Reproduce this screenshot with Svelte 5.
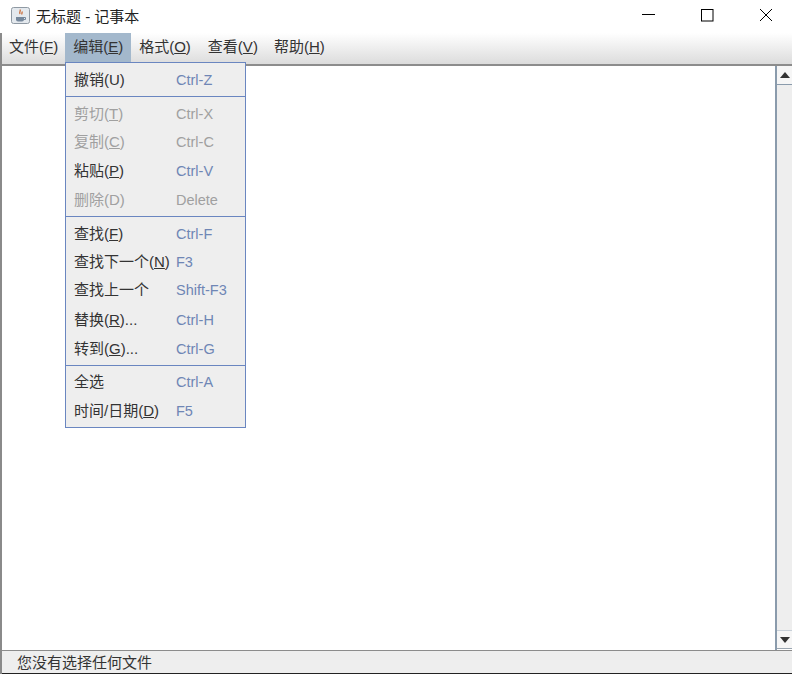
<script lang="ts">
  const menus = [
    { label: '文件', key: 'F' },
    { label: '编辑', key: 'E', active: true },
    { label: '格式', key: 'O' },
    { label: '查看', key: 'V' },
    { label: '帮助', key: 'H' }
  ];

  const groups = [
    [{ label: '撤销(U)', shortcut: 'Ctrl-Z' }],
    [
      { label: '剪切', key: 'T', shortcut: 'Ctrl-X', disabled: true },
      { label: '复制', key: 'C', shortcut: 'Ctrl-C', disabled: true },
      { label: '粘贴', key: 'P', shortcut: 'Ctrl-V' },
      { label: '删除(D)', shortcut: 'Delete', disabled: true }
    ],
    [
      { label: '查找', key: 'F', shortcut: 'Ctrl-F' },
      { label: '查找下一个', key: 'N', shortcut: 'F3' },
      { label: '查找上一个', shortcut: 'Shift-F3' },
      { label: '替换', key: 'R', tail: '...', shortcut: 'Ctrl-H' },
      { label: '转到', key: 'G', tail: '...', shortcut: 'Ctrl-G' }
    ],
    [
      { label: '全选', shortcut: 'Ctrl-A' },
      { label: '时间/日期', key: 'D', shortcut: 'F5' }
    ]
  ];
</script>

<div class="window">
  <header class="titlebar">
    <svg class="titlebar__icon" viewBox="0 0 19 17" width="19" height="17" aria-hidden="true">
      <rect x="0.5" y="0.5" width="18" height="16" rx="2" fill="#e4e9ee" stroke="#8f99a3" />
      <path d="M5 10h8v2.500a2 2 0 0 1-2 2H7a2 2 0 0 1-2-2z" fill="#76889c" />
      <path d="M13 10.500h1.500v2H13" fill="none" stroke="#76889c" />
      <path d="M9 2.500c1 1.500-1 2.500 0 4.500M11 4.500c.6.900-.6 1.600 0 3" fill="none" stroke="#c8642d" stroke-width="1.200" />
    </svg>
    <span class="titlebar__text">无标题 - 记事本</span>
    <div class="titlebar__controls">
      <svg viewBox="0 0 14 14" width="14" height="14" aria-hidden="true"><path d="M1 6.500h13" stroke="#000" fill="none" /></svg>
      <svg viewBox="0 0 14 14" width="14" height="14" aria-hidden="true"><rect x="1.500" y="1.500" width="11.500" height="11.500" stroke="#000" fill="none" /></svg>
      <svg viewBox="0 0 14 14" width="14" height="14" aria-hidden="true"><path d="M1 1l12 12M13 1L1 13" stroke="#000" fill="none" /></svg>
    </div>
  </header>

  <div class="body">
    <nav class="menubar">
      {#each menus as m}
        <span class="menubar__item" class:menubar__item--active={m.active}>{m.label}(<u>{m.key}</u>)</span>
      {/each}
    </nav>

    <div class="content">
      <div class="editor"></div>
      <div class="scrollbar">
        <div class="scrollbar__btn scrollbar__btn--up"><span class="arrow arrow--up"></span></div>
        <div class="scrollbar__track"></div>
        <div class="scrollbar__btn scrollbar__btn--down"><span class="arrow arrow--down"></span></div>
      </div>
    </div>

    <footer class="status">您没有选择任何文件</footer>
  </div>

  <div class="menu">
    {#each groups as group, i}
      {#if i > 0}<div class="menu__sep"></div>{/if}
      <div class="menu__group">
        {#each group as item}
          <div class="menu__row" class:menu__row--disabled={item.disabled}>
            <span class="menu__label">{item.label}{#if item.key}(<u>{item.key}</u>){/if}{item.tail ?? ''}</span>
            <span class="menu__shortcut">{item.shortcut}</span>
          </div>
        {/each}
      </div>
    {/each}
  </div>
</div>

<style>
  :global(body) {
    margin: 0;
    background: #fff;
  }

  .window {
    position: relative;
    width: 792px;
    height: 674px;
    overflow: hidden;
    display: flex;
    flex-direction: column;
    font-family: "Liberation Sans", "Noto Sans CJK SC", sans-serif;
    font-size: 15px;
    color: #333;
  }

  .titlebar {
    flex: 0 0 33px;
    box-sizing: border-box;
    display: flex;
    align-items: center;
    padding: 0 0 2px 11px;
    background: #fff;
    color: #222;
  }

  .titlebar__icon {
    flex-shrink: 0;
    margin-right: 6px;
  }

  .titlebar__controls {
    margin-left: auto;
    display: flex;
    gap: 45px;
    padding: 0 19px 1px 0;
  }

  .body {
    flex: 1;
    min-height: 0;
    display: flex;
    flex-direction: column;
    border-left: 2px solid #8a8a8a;
  }

  .menubar {
    flex: 0 0 33px;
    box-sizing: border-box;
    display: flex;
    border-bottom: 2px solid #8c8c8c;
    background: linear-gradient(#fff, #dcdcdc);
  }

  .menubar__item {
    padding: 0 8px;
    height: 29px;
    line-height: 28px;
  }

  .menubar__item:first-child {
    margin: 0 -1px;
  }

  .menubar__item:nth-child(3) {
    margin-right: 1px;
  }

  .menubar__item--active {
    background: #a3b8cc;
  }

  .content {
    flex: 1;
    min-height: 0;
    display: flex;
    background: #fff;
  }

  .editor {
    flex: 1;
  }

  .scrollbar {
    width: 17px;
    box-sizing: border-box;
    display: flex;
    flex-direction: column;
    padding-bottom: 1px;
    border-left: 2px solid #8a9bac;
    background: #fff;
  }

  .scrollbar__btn {
    flex: 0 0 19px;
    box-sizing: border-box;
    display: flex;
    align-items: center;
    justify-content: center;
    background: #f6f6f6;
  }

  .scrollbar__btn--up {
    border-bottom: 1px solid #8a9bac;
  }

  .scrollbar__btn--down {
    border-top: 1px solid #c8d0d8;
    border-bottom: 1px solid #9aa5b0;
  }

  .scrollbar__track {
    flex: 1;
    background: #eee;
  }

  .arrow {
    width: 0;
    height: 0;
    border-left: 5px solid transparent;
    border-right: 5px solid transparent;
  }

  .arrow--up {
    border-bottom: 6px solid #333;
  }

  .arrow--down {
    border-top: 6px solid #333;
  }

  .status {
    flex: 0 0 24px;
    min-height: 0;
    overflow: hidden;
    box-sizing: border-box;
    padding-left: 15px;
    line-height: 24px;
    background: #eee;
    border-top: 1px solid #8c8c8c;
    border-bottom: 1px solid #222;
  }

  /* open dropdown sits over the editor */
  .menu {
    position: absolute;
    left: 65px;
    top: 62px;
    width: 181px;
    height: 366px;
    box-sizing: border-box;
    padding: 3px 0;
    background: #eee;
    border: 1px solid #6a86c0;
  }

  .menu__group:nth-of-type(1) {
    height: 29px;
  }

  .menu__group:nth-of-type(3) {
    height: 115px;
  }

  .menu__group:nth-of-type(5) {
    height: 144px;
  }

  .menu__group:nth-of-type(7) {
    margin-top: -1px;
  }

  .menu__row {
    display: flex;
    height: 29px;
    line-height: 28px;
    padding-left: 8px;
  }

  .menu__group:nth-of-type(3) .menu__row:first-child,
  .menu__group:nth-of-type(5) .menu__row:nth-child(-n + 2) {
    height: 28px;
  }

  .menu__group:nth-of-type(5) .menu__row:nth-child(3) {
    height: 30px;
  }

  .menu__label {
    flex: 0 0 102px;
    white-space: nowrap;
  }

  .menu__shortcut {
    font-size: 14.500px;
    color: #6f86b5;
  }

  .menu__row--disabled,
  .menu__row--disabled .menu__shortcut {
    color: #a0a0a0;
  }

  .menu__sep {
    height: 1px;
    margin: 1px 0 3px;
    background: #6a86c0;
  }
</style>
